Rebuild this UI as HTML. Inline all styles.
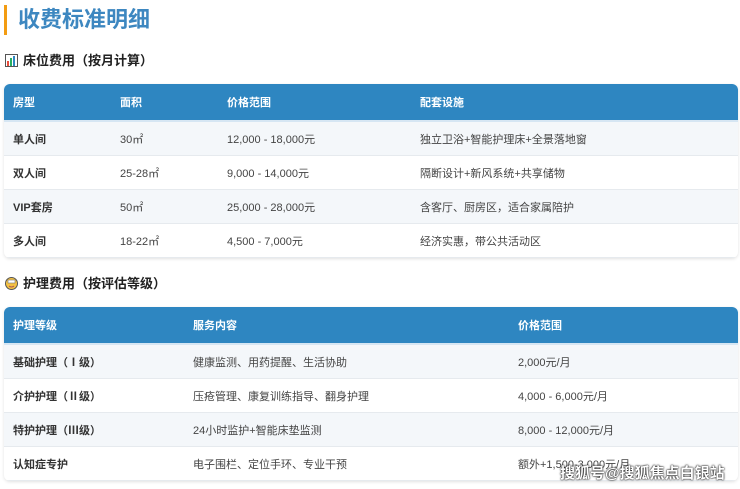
<!DOCTYPE html><html><head><meta charset="utf-8"><style>
body{margin:0;width:740px;height:489px;background:#fff;font-family:"Liberation Sans","Noto Sans CJK SC",sans-serif;position:relative;overflow:hidden;color:#333}
.t{position:absolute;left:4px;top:5px;height:30px;border-left:3px solid #f39c12;padding-left:11px;font-size:22px;font-weight:bold;color:#3d87c0;line-height:30px}
h3{position:absolute;left:5px;margin:0;font-size:13px;font-weight:bold;color:#222;line-height:16px}
table{position:absolute;left:4px;width:734px;border-collapse:collapse;font-size:11px;border-radius:6px;overflow:hidden;box-shadow:0 1px 3px rgba(0,0,0,.12)}
th{background:#2e86c1;color:#fff;text-align:left;font-weight:bold;padding:0 0 0 9px;height:36px;border-bottom:2px solid #d6e6f3}
td{padding:0 0 0 9px;height:33px;border-bottom:1px solid #e6eaee;color:#444}
tr:nth-child(even) td{background:#f4f7fa}
td:first-child{font-weight:bold;color:#333}
.ic{display:inline-block;width:13px;height:13px;vertical-align:-2px;margin-right:5px}
.wm{position:absolute;left:560px;top:462px;font-size:15px;color:#fff;font-weight:bold;text-shadow:0 0 2px #000,0 0 1px #000}
</style></head><body>
<div class="t">收费标准明细</div>
<h3 style="top:53px"><svg class="ic" viewBox="0 0 13 13"><rect x=".5" y=".5" width="12" height="12" fill="#fff" stroke="#555"/><rect x="2" y="7" width="2" height="5" fill="#e74c3c"/><rect x="5" y="4" width="2" height="8" fill="#27ae60"/><rect x="8" y="2" width="2" height="10" fill="#2e86c1"/></svg>床位费用（按月计算）</h3>
<table style="top:84px"><tr><th style="width:98px">房型</th><th style="width:98px">面积</th><th style="width:184px">价格范围</th><th>配套设施</th></tr>
<tr><td>单人间</td><td>30㎡</td><td>12,000 - 18,000元</td><td>独立卫浴+智能护理床+全景落地窗</td></tr>
<tr><td>双人间</td><td>25-28㎡</td><td>9,000 - 14,000元</td><td>隔断设计+新风系统+共享储物</td></tr>
<tr><td>VIP套房</td><td>50㎡</td><td>25,000 - 28,000元</td><td>含客厅、厨房区，适合家属陪护</td></tr>
<tr><td>多人间</td><td>18-22㎡</td><td>4,500 - 7,000元</td><td>经济实惠，带公共活动区</td></tr></table>
<h3 style="top:276px"><svg class="ic" viewBox="0 0 13 13"><circle cx="6.5" cy="6.5" r="6" fill="#f5c242" stroke="#555"/><rect x="3" y="3" width="7" height="3" fill="#fff" stroke="#777" stroke-width=".6"/><path d="M4 9q2.5 2 5 0" stroke="#a55" fill="none"/></svg>护理费用（按评估等级）</h3>
<table style="top:307px"><tr><th style="width:171px">护理等级</th><th style="width:316px">服务内容</th><th>价格范围</th></tr>
<tr><td>基础护理（Ⅰ级）</td><td>健康监测、用药提醒、生活协助</td><td>2,000元/月</td></tr>
<tr><td>介护护理（Ⅱ级）</td><td>压疮管理、康复训练指导、翻身护理</td><td>4,000 - 6,000元/月</td></tr>
<tr><td>特护护理（Ⅲ级）</td><td>24小时监护+智能床垫监测</td><td>8,000 - 12,000元/月</td></tr>
<tr><td>认知症专护</td><td>电子围栏、定位手环、专业干预</td><td>额外+1,500-3,000元/月</td></tr></table>
<div class="wm">搜狐号@搜狐焦点白银站</div>
</body></html>
